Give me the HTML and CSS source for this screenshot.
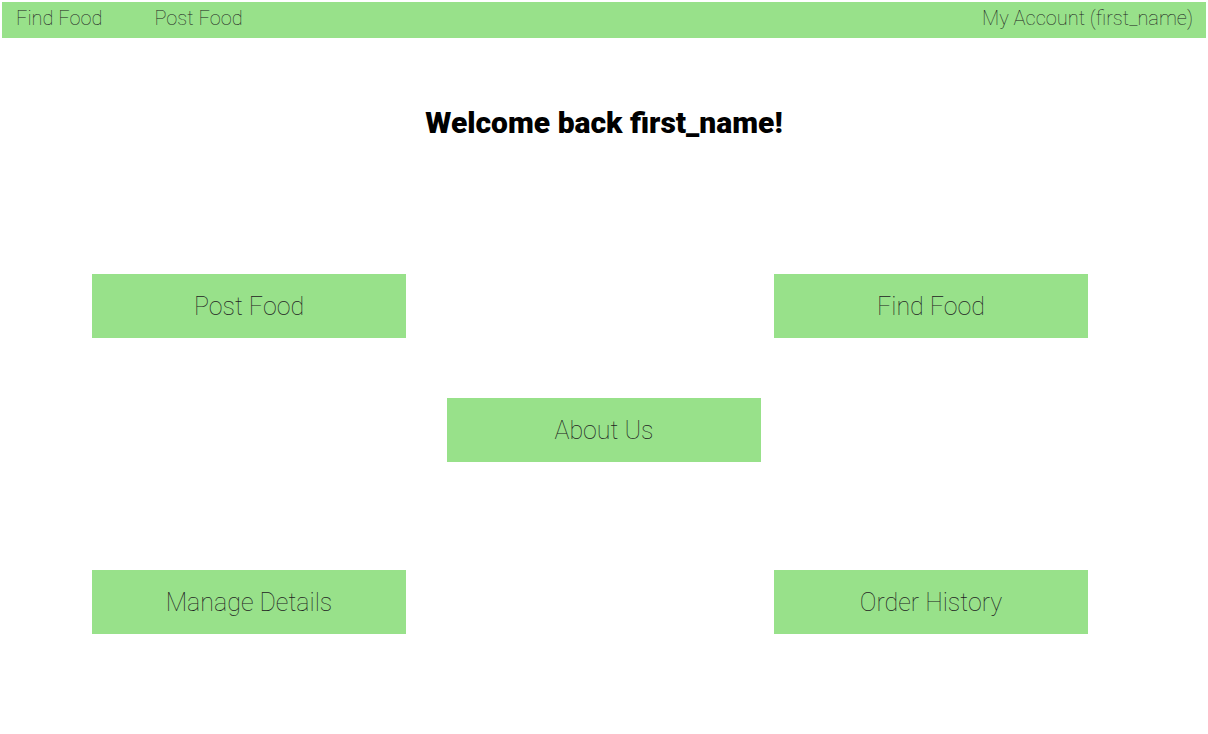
FILE: index.html
```html
<!DOCTYPE html>
<html>
<head>
<meta charset="utf-8">
<link rel="stylesheet" href="styles.css">
</head>
<body>
<nav class="nav">
  <div class="nav-left">
    <a class="nav-link">Find Food</a>
    <a class="nav-link">Post Food</a>
  </div>
  <a class="nav-link">My Account (first_name)</a>
</nav>
<h1 class="title">Welcome back first_name!</h1>
<main class="grid">
  <a class="btn b-post">Post Food</a>
  <a class="btn b-find">Find Food</a>
  <a class="btn b-about">About Us</a>
  <a class="btn b-manage">Manage Details</a>
  <a class="btn b-order">Order History</a>
</main>
</body>
</html>
```

FILE: styles.css
```css
html, body { margin: 0; padding: 0; background: #fff; }
body { padding: 2px; font-family: Roboto, "Liberation Sans", sans-serif; }
.nav {
  height: 36px;
  background: #98e18a;
  display: flex;
  align-items: center;
  justify-content: space-between;
  padding: 0 13px 4px 14px;
  box-sizing: border-box;
}
.nav-left { display: flex; gap: 52px; }
.nav-link {
  font-size: 20px;
  font-weight: 100;
  line-height: 24px;
  color: #222;
}
.title {
  margin: 67px 0 0;
  text-align: center;
  font-size: 30px;
  font-weight: 900;
  line-height: 36px;
  color: #000;
}
.grid {
  display: grid;
  grid-template-columns: 355px 327px 314px;
  grid-template-rows: 124px 172px 64px;
  padding-left: 90px;
  margin-top: 133px;
}
.btn {
  width: 314px;
  height: 64px;
  background: #98e18a;
  display: flex;
  align-items: center;
  justify-content: center;
  font-size: 25px;
  font-weight: 100;
  color: #222;
  align-self: start;
}
.b-post { grid-column: 1; grid-row: 1; }
.b-find { grid-column: 3; grid-row: 1; }
.b-about { grid-column: 2; grid-row: 2; }
.b-manage { grid-column: 1; grid-row: 3; }
.b-order { grid-column: 3; grid-row: 3; }
```
